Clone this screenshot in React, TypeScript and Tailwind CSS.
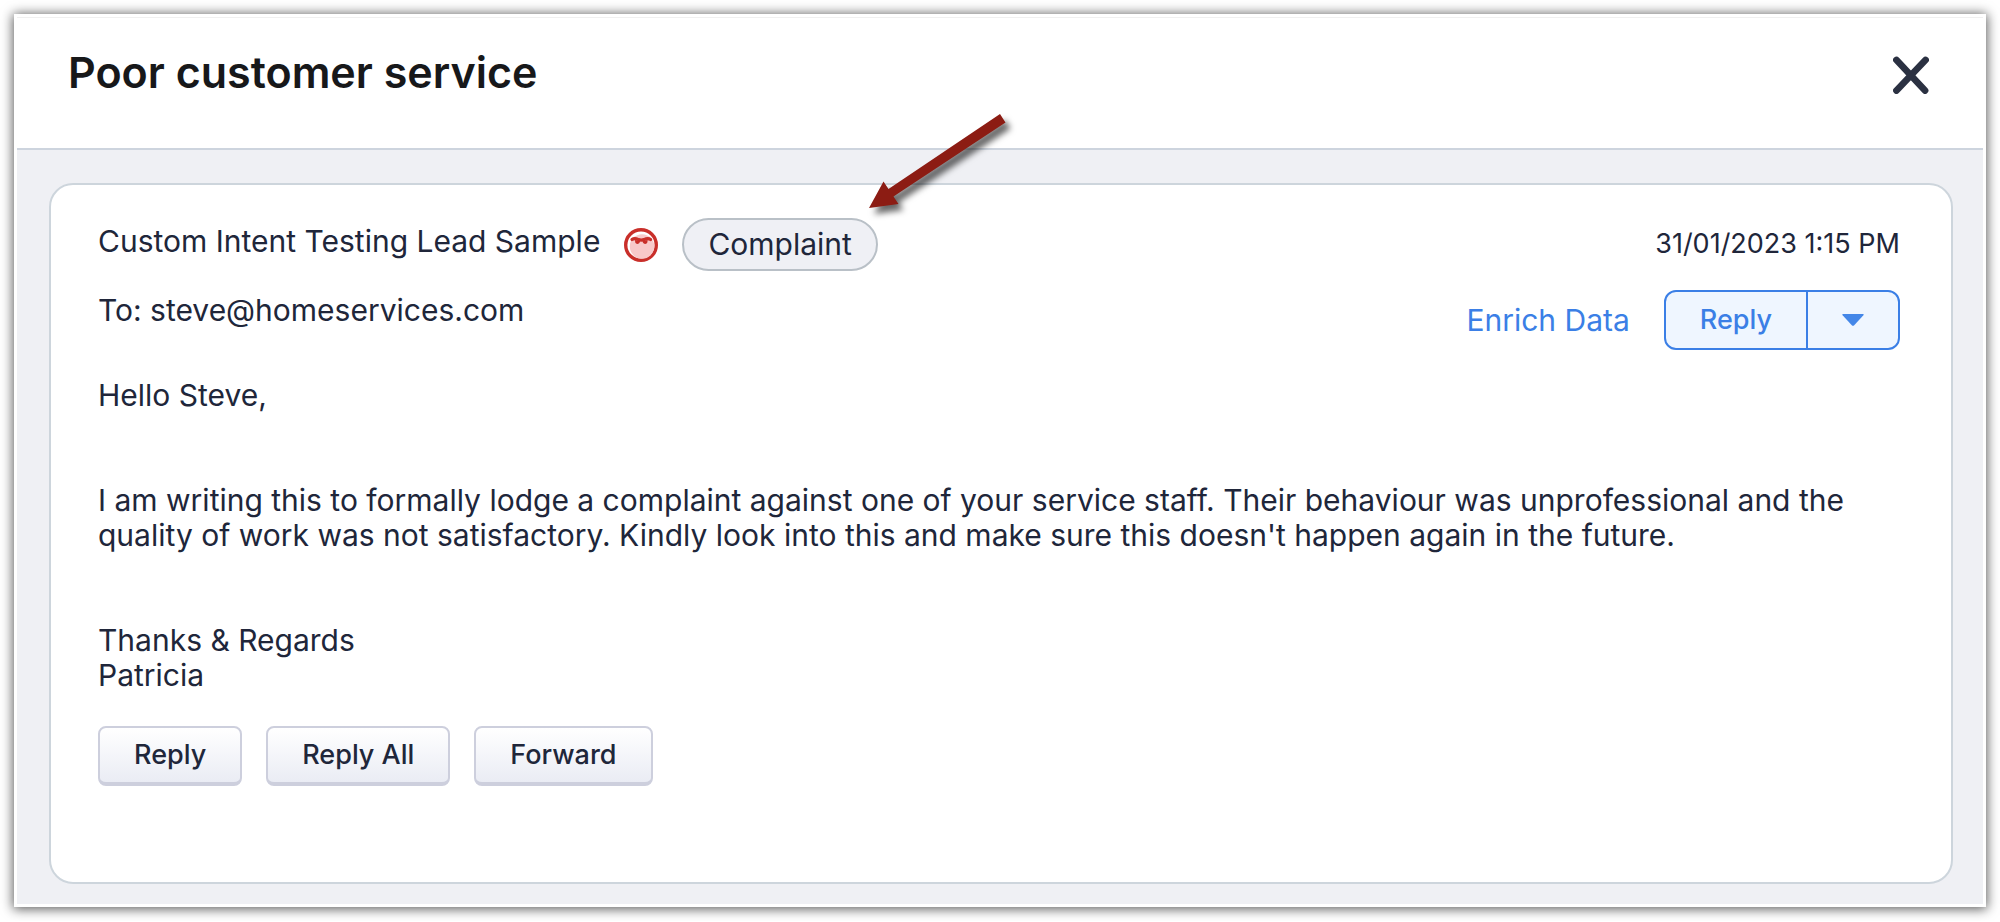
const LETTER = `Hello Steve,


I am writing this to formally lodge a complaint against one of your service staff. Their behaviour was unprofessional and the quality of work was not satisfactory. Kindly look into this and make sure this doesn't happen again in the future.


Thanks & Regards
Patricia`;

const ACTIONS = ['Reply', 'Reply All', 'Forward'];

function CloseIcon() {
  return (
    <svg width="36" height="38" viewBox="0 0 36 38" fill="none" stroke="#2b3142" strokeWidth="6.8" strokeLinecap="round" aria-hidden="true">
      <path d="M3.5 4 L32 34.5 M32.5 4 L3.5 34.5" />
    </svg>
  );
}

function AngryFace() {
  return (
    <svg className="shrink-0 self-center" width="34" height="34" viewBox="0 0 34 34" role="img" aria-label="Negative sentiment">
      <circle cx="17" cy="17" r="15.3" fill="#fff" stroke="#c92f2a" strokeWidth="3.4" />
      <circle cx="18" cy="18.5" r="12.2" fill="#f8c9ca" />
      <path
        d="M8 11.6 C10 10 12.5 10.6 14.5 11.6 C16.3 12.2 18.2 12.2 20 11.6 C22 10.6 24.5 10 26.6 11.6"
        fill="none" stroke="#c92f2a" strokeWidth="3.2" strokeLinecap="round"
      />
      <path d="M11 12 L16.2 13 C15.6 16.4 12 16.8 11.2 14.2 Z M18.4 13 L23.6 12 L23.4 14.2 C22.6 16.8 19 16.4 18.4 13 Z" fill="#c92f2a" />
    </svg>
  );
}

// Callout arrow that points at the intent tag
function PointerArrow() {
  return (
    <svg
      className="pointer-events-none absolute -top-29 left-45 z-10 overflow-visible drop-shadow-[5px_6px_3px_rgba(0,0,0,0.6)]"
      width="160" height="120" viewBox="0 0 160 120" aria-hidden="true"
    >
      <path d="M138 12 L143.5 20.5 L31.5 94.5 L36.5 102 L7 106 L21.5 79.5 L26.5 87 Z" fill="#8c1c13" />
    </svg>
  );
}

function SplitReply() {
  return (
    <div className="flex h-[60px] overflow-hidden rounded-xl border-2 border-[#3b7fe6] bg-[#eff6ff] text-[#3b7fe6]">
      <button type="button" className="px-[34px] text-[27px] font-medium">Reply</button>
      <button type="button" aria-label="More reply options" className="flex w-[92px] items-center justify-center border-l-2 border-[#3b7fe6]">
        <svg width="22" height="12" viewBox="0 0 22 12" fill="#4487e8" aria-hidden="true">
          <path d="M1 0 H21 Q22.4 0 21.4 1.2 L12.2 11.3 Q11 12.4 9.8 11.3 L0.6 1.2 Q-0.4 0 1 0 Z" />
        </svg>
      </button>
    </div>
  );
}

export default function App() {
  return (
    <div className="bg-white p-[14px] font-[Inter,sans-serif] text-[#20263a]">
      <section className="border-[3px] border-white bg-[#eff0f4] shadow-[0_1px_11px_1px_rgba(0,0,0,0.65)]">
        <header className="flex items-start justify-between border-t border-b-2 border-t-[#f0f0f0] border-b-[#cdd4de] bg-white pt-[26px] pr-[54px] pb-12 pl-[51px]">
          <h1 className="text-[43px] leading-14 font-semibold text-[#17181a]">Poor customer service</h1>
          <button type="button" aria-label="Close" className="mt-3"><CloseIcon /></button>
        </header>

        <main className="pt-[33px] pr-[30px] pb-5 pl-8">
          <article className="rounded-3xl border-2 border-[#cdd5dc] bg-white pt-[33px] pr-[51px] pb-24 pl-[47px]">
            <div className="flex justify-between">
              <div>
                <div className="flex items-start gap-6">
                  <span className="text-[30px] leading-[46px]">Custom Intent Testing Lead Sample</span>
                  <AngryFace />
                  <div className="relative">
                    <span className="block rounded-full border-2 border-[#b9c0c7] bg-[#eff0f5] px-6 text-[30px] leading-[49px]">Complaint</span>
                    <PointerArrow />
                  </div>
                </div>
                <p className="mt-[21px] text-[30px] leading-9">To: steve@homeservices.com</p>
              </div>

              <div className="flex flex-col items-end gap-5">
                <time dateTime="2023-01-31T13:15" className="text-[27px] leading-[52px]">31/01/2023 1:15 PM</time>
                <div className="flex items-center gap-[34px]">
                  <a href="#enrich" className="text-[30px] text-[#3b7fe6]">Enrich Data</a>
                  <SplitReply />
                </div>
              </div>
            </div>

            <p className="mt-7 text-[30px] leading-[35px] whitespace-pre-line">{LETTER}</p>

            <div className="mt-[33px] flex gap-6">
              {ACTIONS.map(label => (
                <button
                  key={label}
                  type="button"
                  className="h-[60px] rounded-lg border-2 border-b-4 border-[#cdcfdd] bg-linear-to-b from-white to-[#eaecf4] px-[34px] text-[27px] font-medium"
                >
                  {label}
                </button>
              ))}
            </div>
          </article>
        </main>
      </section>
    </div>
  );
}
